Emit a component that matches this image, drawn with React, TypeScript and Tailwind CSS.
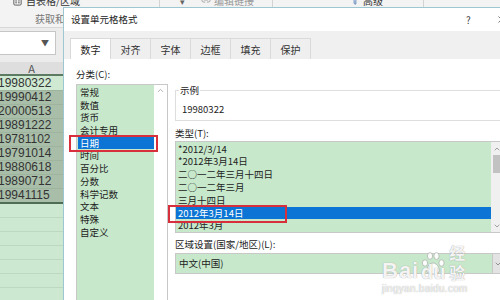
import React from 'react';
import { ChevronUp, ChevronDown, X, FileSpreadsheet, Link2, Filter } from 'lucide-react';

const categories = ['常规', '数值', '货币', '会计专用', '日期', '时间', '百分比', '分数', '科学记数', '文本', '特殊', '自定义'];
const types = ['*2012/3/14', '*2012年3月14日', '二○一二年三月十四日', '二○一二年三月', '三月十四日', '2012年3月14日', '2012年3月'];
const cells = ['19980322', '19990412', '20000513', '19891222', '19781102', '19791014', '19880618', '19890712', '19941115'];
const tabs = ['数字', '对齐', '字体', '边框', '填充', '保护'];

const Sheet: React.FC = () => {
  return (
    <div className="flex flex-col h-full">
      {/* ribbon */}
      <div className="h-[28px] shrink-0 bg-[#f3f3f3] border-b border-[#d8d8d8] flex text-[10px] text-[#666]">
        <div className="w-[160px] border-r border-[#d4d4d4] flex flex-col">
          <div className="flex items-center gap-[3px] pl-[12px] -mt-[6px] h-[12px]">
            <FileSpreadsheet className="w-[11px] h-[11px] text-[#555]" />
            <span className="text-[#333]">自表格/区域</span>
          </div>
          <div className="pl-[35px] mt-[5px] text-[#777]">获取和转换</div>
        </div>
        <div className="w-[113px] border-r border-[#d4d4d4] flex items-start">
          <span className="pl-[20px] -mt-[5px] text-[9px]">▾</span>
          <div className="flex items-center gap-[3px] pl-[16px] -mt-[6px] h-[12px] text-[#999]">
            <Link2 className="w-[10px] h-[10px]" />
            <span>编辑链接</span>
          </div>
        </div>
        <div className="w-[151px] border-r border-[#d4d4d4] flex items-start justify-end pr-[40px]">
          <div className="flex items-center gap-[3px] -mt-[6px] h-[12px] text-[#333]">
            <Filter className="w-[10px] h-[10px] text-[#3a6fb0]" />
            <span>高级</span>
          </div>
        </div>
        <div className="flex-1" />
      </div>

      {/* name box */}
      <div className="h-[34px] shrink-0 bg-[#ececec] pt-[3px]">
        <div className="w-[56px] h-[24px] bg-white border border-[#c6c6c6] border-l-0 flex items-center justify-end pr-[6px] text-[#555] text-[8px]">
          ▼
        </div>
      </div>

      {/* column header */}
      <div className="w-[63px] h-[14px] shrink-0 bg-[#dedede] border-b-2 border-[#5d7a62] flex items-center justify-center text-[11px] text-[#555] leading-none">
        A
      </div>

      {/* cells */}
      <div className="w-[63px] flex flex-col border-b-2 border-[#4f6d55] font-['Liberation_Sans',sans-serif]">
        {cells.map((c, i) => (
          <div
            key={c}
            className={
              i === 0
                ? 'h-[14px] bg-[#cfe9d2] text-[#333] text-[12px] leading-[14px] -ml-[2px]'
                : 'h-[14px] bg-[#a9bea9] border-t border-[#9fb49f] text-[#333] text-[12px] leading-[13px] -ml-[2px]'
            }
          >
            {c}
          </div>
        ))}
      </div>
      <div className="w-[63px] flex-1 bg-[#cde8d0] flex flex-col">
        {Array.from({ length: 8 }).map((_, i) => (
          <div key={i} className="h-[14px] border-b border-[#bcd8bf]" />
        ))}
      </div>
    </div>
  );
};

const Dialog: React.FC = () => {
  return (
    <div className="absolute left-[63px] top-[7px] w-[450px] h-[300px] bg-white border-t border-l border-[#9cc6d2] flex flex-col text-[9.5px] text-[#222]">
      {/* title */}
      <div className="h-[23px] shrink-0 flex items-center pl-[7px]">
        <span className="flex-1 text-[9.5px]">设置单元格格式</span>
        <span className="w-[10px] text-[10px] text-[#444]">?</span>
        <X className="ml-[20px] mr-[6px] w-[11px] h-[11px] text-[#444]" strokeWidth={1.5} />
      </div>

      {/* tabs */}
      <div className="h-[28px] shrink-0 bg-[#f0f0f0] pt-[7px] pl-[6px] flex items-end text-[10px]">
        {tabs.map((t, i) => (
          <div
            key={t}
            className={
              i === 0
                ? 'w-[41px] h-[21px] bg-white border border-b-0 border-[#d9d9d9] flex items-center justify-center'
                : 'w-[40px] h-[21px] border-t border-r border-[#dadada] bg-[#efefef] flex items-center justify-center text-[#333]'
            }
          >
            {t}
          </div>
        ))}
      </div>

      {/* body */}
      <div className="flex-1 flex gap-[7px] pl-[12px] pt-[8px]">
        {/* category */}
        <div className="w-[92px] flex flex-col">
          <div className="h-[17px] leading-[15px]">分类(C):</div>
          <div className="h-[230px] border border-[#c8c8c8] flex">
            <div className="flex-1 bg-[#c7e8cb] pt-[1px] pl-[1px]">
              {categories.map((c) => (
                <div
                  key={c}
                  className={
                    c === '日期'
                      ? 'relative h-[12.7px] leading-[12.7px] pl-[2px] bg-[#0b74d4] text-white'
                      : 'h-[12.7px] leading-[12.7px] pl-[2px]'
                  }
                >
                  {c}
                  {c === '日期' && (
                    <div className="absolute -left-[9px] -right-[4px] -top-[2px] -bottom-[3px] border-2 border-[#d7303c]" />
                  )}
                </div>
              ))}
            </div>
            <div className="w-[13px] bg-white flex justify-center pt-[1px]">
              <ChevronUp className="w-[9px] h-[9px] text-[#999]" />
            </div>
          </div>
        </div>

        {/* right */}
        <div className="w-[329px] flex flex-col">
          <fieldset className="mt-[16px] h-[38px] border border-[#dedede] pl-[3px]">
            <legend className="px-[1px] leading-[14px]">示例</legend>
            <div className="pt-[5px] pl-[3px] leading-[14px]">19980322</div>
          </fieldset>

          <div className="mt-[5px] h-[15px] leading-[14px]">类型(T):</div>

          <div className="h-[92px] border border-[#c8c8c8] flex">
            <div className="flex-1 bg-[#c7e8cb] pt-[0.6px]">
              {types.map((t, i) => (
                <div
                  key={t}
                  className={
                    i === 5
                      ? 'relative h-[12.8px] leading-[12.8px] pl-[2px] bg-[#0b74d4] text-white'
                      : 'h-[12.8px] leading-[12.8px] pl-[2px]'
                  }
                >
                  {t}
                  {i === 5 && (
                    <div className="absolute -left-[8px] w-[119px] -top-[2px] -bottom-[4px] border-2 border-[#d7303c]" />
                  )}
                </div>
              ))}
            </div>
            <div className="w-[12px] bg-[#f0f0f0] flex flex-col items-center">
              <ChevronUp className="mt-[3px] w-[8px] h-[8px] text-[#777]" />
              <div className="mt-[2px] w-[9px] h-[18px] bg-[#c2c2c2]" />
              <div className="flex-1" />
              <ChevronDown className="mb-[2px] w-[8px] h-[8px] text-[#777]" />
            </div>
          </div>

          <div className="mt-[4px] h-[14px] leading-[14px]">区域设置(国家/地区)(L):</div>

          <div className="mt-[2px] h-[21px] border border-[#c8c8c8] flex">
            <div className="flex-1 bg-[#c7e8cb] pl-[3px] leading-[19px]">中文(中国)</div>
            <div className="w-[11px] bg-[#e3e3e3] border-l border-[#c8c8c8] flex items-center justify-center">
              <ChevronDown className="w-[8px] h-[8px] text-[#666]" />
            </div>
          </div>
        </div>
      </div>
    </div>
  );
};

const Watermark: React.FC = () => {
  return (
    <div className="absolute left-[382px] top-[236px] w-[95px] flex flex-col items-start text-white/90 [text-shadow:0_0_1px_#8a8a8a]">
      <div className="flex items-end h-[46px]">
        <span className="text-[22px] font-bold leading-[22px] font-['Liberation_Sans',sans-serif] tracking-[1px]">Bai</span>
        <div className="flex flex-col items-center">
          <svg width="28" height="24" viewBox="0 0 28 24" className="mb-[1px]">
            <g fill="#ffffff" fillOpacity="0.9" stroke="#a0a0a0" strokeWidth="0.6">
              <ellipse cx="6" cy="12" rx="2.6" ry="3.2" />
              <ellipse cx="11" cy="5" rx="2.6" ry="3.4" />
              <ellipse cx="17.5" cy="5" rx="2.6" ry="3.4" />
              <ellipse cx="22.5" cy="12" rx="2.6" ry="3.2" />
              <path d="M14 12 C9 12 6 20 9 22 C11 23.5 17 23.5 19 22 C22 20 19 12 14 12 Z" />
            </g>
          </svg>
          <span className="text-[20px] font-bold leading-[20px] -mt-[14px] font-['Liberation_Sans',sans-serif]">du</span>
        </div>
        <span className="ml-[2px] text-[16px] leading-[20px] font-bold">经验</span>
      </div>
      <div className="mt-[1px] text-[10px] leading-[12px] font-['Liberation_Sans',sans-serif] tracking-[0.3px]">jingyan.baidu.com</div>
    </div>
  );
};

export default function App() {
  return (
    <div className="relative w-[500px] h-[300px] overflow-hidden bg-[#e9e9e9] font-['Noto_Sans_CJK_SC',sans-serif]">
      <Sheet />
      <Dialog />
      <Watermark />
    </div>
  );
}
